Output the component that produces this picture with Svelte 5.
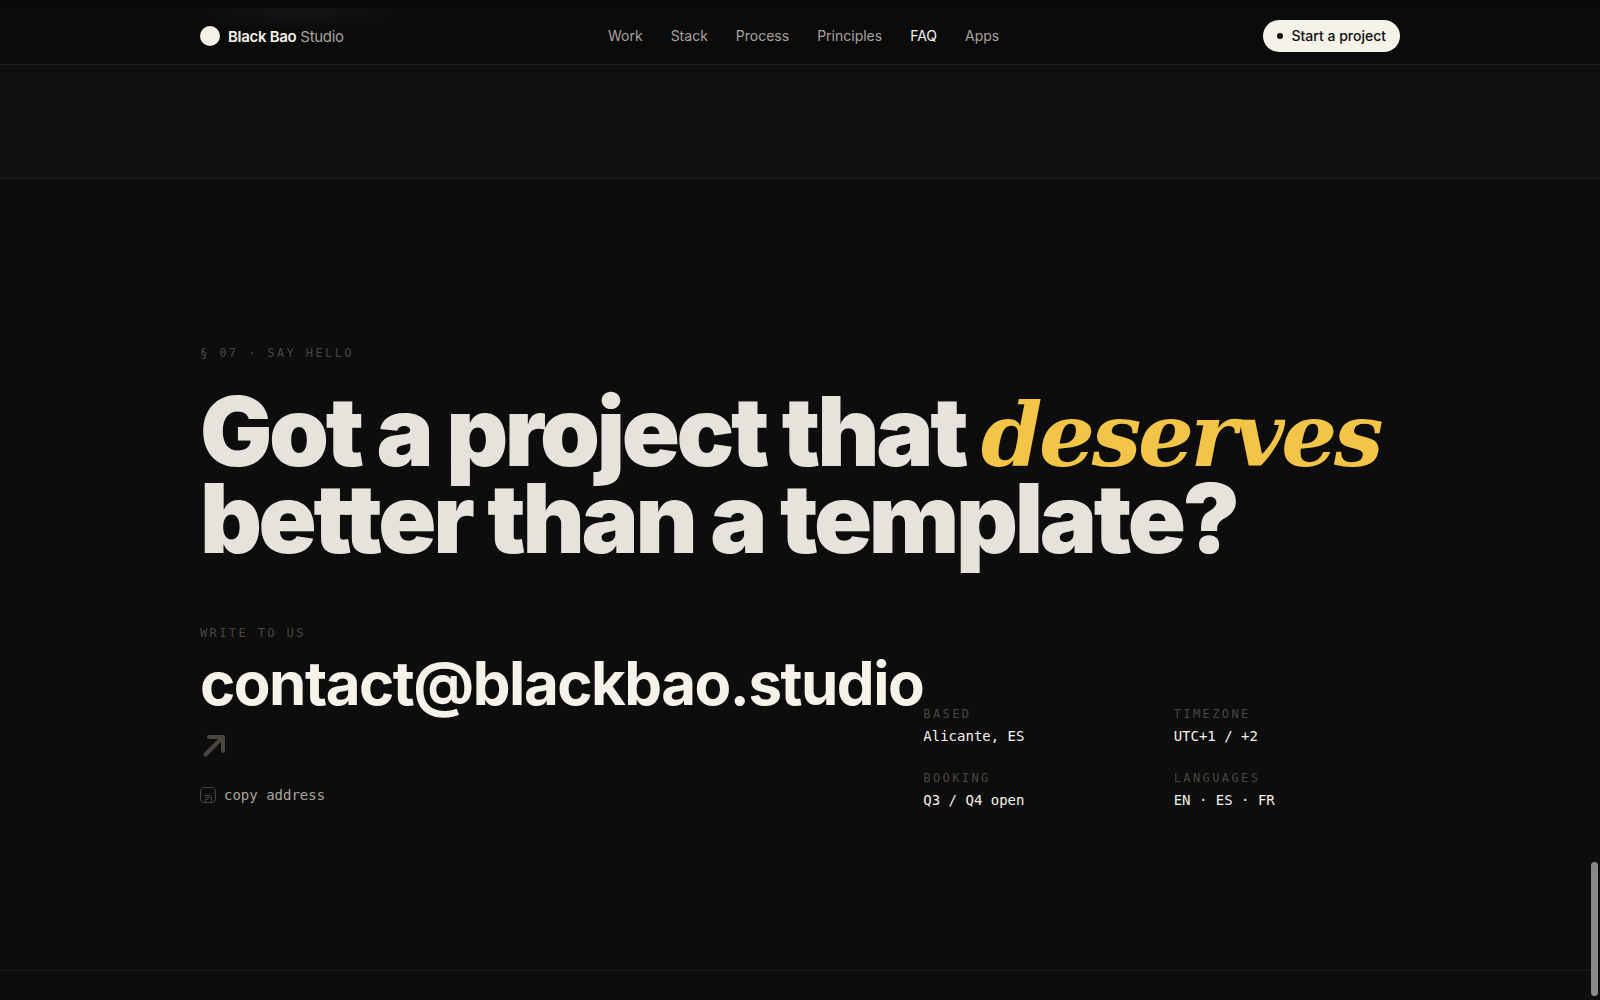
<script lang="ts">
  const links = [
    { label: 'Work', href: '#work' },
    { label: 'Stack', href: '#stack' },
    { label: 'Process', href: '#process' },
    { label: 'Principles', href: '#principles' },
    { label: 'FAQ', href: '#faq' },
    { label: 'Apps', href: '#apps' }
  ];

  const facts = [
    { term: 'Based', value: 'Alicante, ES' },
    { term: 'Timezone', value: 'UTC+1 / +2' },
    { term: 'Booking', value: 'Q3 / Q4 open' },
    { term: 'Languages', value: 'EN · ES · FR' }
  ];

  const email = 'contact@blackbao.studio';
  let active = $state('#faq');

  function copyAddress() {
    navigator.clipboard?.writeText(email);
  }
</script>

<div class="page">
  <header class="nav">
    <div class="wrap nav-inner">
      <a class="brand" href="#top">
        <span class="brand-dot"></span>
        <span><b>Black Bao</b> Studio</span>
      </a>
      <nav class="nav-links">
        {#each links as link}
          <a
            href={link.href}
            class:active={active === link.href}
            onclick={() => (active = link.href)}>{link.label}</a>
        {/each}
      </nav>
      <a class="cta" href="#contact"><span class="cta-dot"></span>Start a project</a>
    </div>
  </header>

  <div class="prev-section"></div>

  <section class="contact" id="contact">
    <div class="wrap">
      <p class="label">§ 07 · Say hello</p>
      <h1>Got a project that <em>deserves</em><br />better than a template?</h1>

      <div class="grid">
        <div>
          <p class="label">Write to us</p>
          <a class="email" href="mailto:{email}">
            <span>{email}</span>
            <svg class="arrow" viewBox="0 0 28 28" aria-hidden="true">
              <path d="M5.5 22.5 L22.5 5.5 M9 5 H23 V19" />
            </svg>
          </a>
          <button class="copy" type="button" onclick={copyAddress}>
            <svg class="copy-icon" viewBox="0 0 16 16" aria-hidden="true">
              <rect x="0.5" y="0.5" width="15" height="15" rx="3.5" />
              <path d="M5 8.5 H10 M5.5 10.5 H9 M5.5 12.5 H8.5 M5.5 12.5 V15 M9.5 10.5 H11.5 V15" />
            </svg>
            copy address
          </button>
        </div>

        <dl class="facts">
          {#each facts as fact}
            <div>
              <dt class="label">{fact.term}</dt>
              <dd>{fact.value}</dd>
            </div>
          {/each}
        </dl>
      </div>
    </div>
  </section>

  <footer class="footer"></footer>
  <div class="scroll-thumb"></div>
</div>

<style>
  :global(body) {
    background: #0d0d0d;
    overflow: hidden;
  }

  .page {
    min-height: 100vh;
    background: #0d0d0d;
    color: #f5f2ea;
    font-family: Inter, sans-serif;
    -webkit-font-smoothing: antialiased;
  }

  .wrap {
    max-width: 1200px;
    margin: 0 auto;
    padding: 0 32px;
  }

  a {
    color: inherit;
    text-decoration: none;
  }

  .nav {
    padding-top: 8px;
    background:
      linear-gradient(#090909, #090909) 0 0 / 100% 8px no-repeat,
      radial-gradient(130px 24px at 300px 8px, #151515, transparent) no-repeat,
      #0b0b0b;
    border-bottom: 1px solid #22211e;
  }

  .nav-inner {
    display: flex;
    align-items: center;
    justify-content: space-between;
    height: 56px;
  }

  .brand {
    display: flex;
    align-items: center;
    gap: 8px;
    font-size: 15px;
    letter-spacing: -0.02em;
    color: #a8a49b;
  }

  .brand b {
    font-weight: 600;
    color: #f5f2ea;
  }

  .brand-dot {
    width: 20px;
    height: 20px;
    border-radius: 50%;
    background: #f5f2ea;
  }

  .nav-links {
    display: flex;
    gap: 28px;
    font-size: 14px;
    line-height: 18px;
    color: #a8a49b;
  }

  .nav-links .active {
    color: #f5f2ea;
  }

  .cta {
    display: flex;
    align-items: center;
    gap: 8px;
    height: 32px;
    padding: 0 14px;
    border-radius: 16px;
    background: #f5f2ea;
    color: #0d0d0d;
    font-size: 14px;
    font-weight: 500;
    line-height: 18px;
  }

  .cta-dot {
    width: 6px;
    height: 6px;
    border-radius: 50%;
    background: #0d0d0d;
  }

  .prev-section {
    height: 113px;
    background: #10100e;
    border-bottom: 1px solid #22211e;
  }

  .contact {
    padding: 164px 0 158px;
  }

  .label {
    margin: 0;
    font-family: 'DejaVu Sans Mono', monospace;
    font-size: 12px;
    line-height: 20px;
    letter-spacing: 0.2em;
    text-transform: uppercase;
    color: #4a4740;
  }

  h1 {
    margin: 25px 0 61px;
    font-size: 96px;
    font-weight: 900;
    line-height: 87px;
    letter-spacing: -0.035em;
    color: #e6e3dc;
  }

  h1 em {
    font-family: Georgia, 'DejaVu Serif', serif;
    font-size: 88px;
    font-weight: 700;
    line-height: 0;
    color: #f2c447;
  }

  .grid {
    display: grid;
    grid-template-columns: minmax(0, 7fr) minmax(0, 5fr);
    gap: 56px;
    align-items: end;
  }

  .email {
    display: block;
    margin-top: 4px;
    font-size: 60px;
    font-weight: 700;
    line-height: 72px;
    letter-spacing: -0.025em;
    white-space: nowrap;
  }

  .arrow {
    display: block;
    width: 28px;
    height: 28px;
    margin-top: 13px;
    fill: none;
    stroke: #4a4740;
    stroke-width: 4;
    stroke-linecap: round;
    stroke-linejoin: round;
  }

  .copy {
    display: flex;
    align-items: center;
    gap: 8px;
    margin-top: 18px;
    padding: 0;
    border: 0;
    background: none;
    color: #a8a49b;
    font-family: 'DejaVu Sans Mono', monospace;
    font-size: 14px;
    line-height: 34px;
    cursor: pointer;
  }

  .copy-icon {
    width: 16px;
    height: 16px;
    fill: none;
    stroke: #4a4740;
    stroke-width: 1;
  }

  .facts {
    display: grid;
    grid-template-columns: 1fr 1fr;
    gap: 20px 24px;
    margin: 0;
  }

  .facts dd {
    margin: 0;
    font-family: 'DejaVu Sans Mono', monospace;
    font-size: 14px;
    line-height: 24px;
  }

  .footer {
    border-top: 1px solid #1b1b19;
  }

  .scroll-thumb {
    position: fixed;
    right: 2px;
    bottom: 4px;
    width: 7px;
    height: 134px;
    border-radius: 4px;
    background: #888;
  }
</style>
